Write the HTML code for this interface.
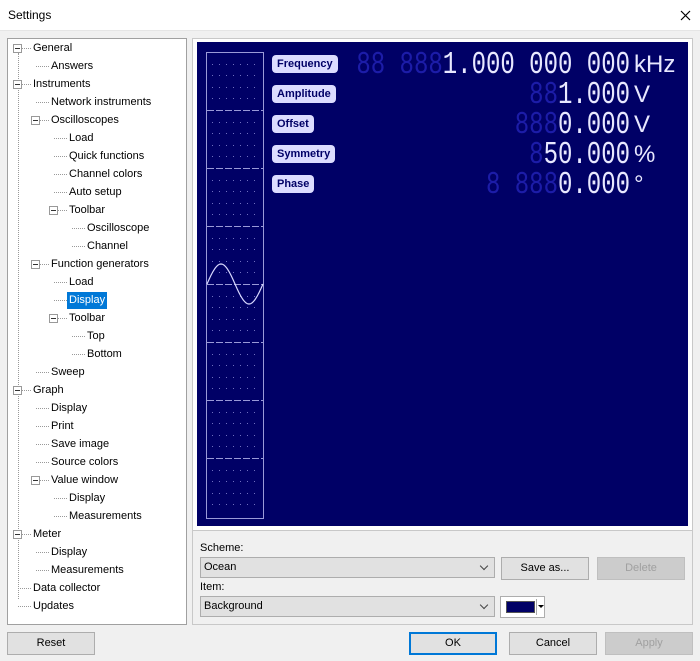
<!DOCTYPE html>
<html><head><meta charset="utf-8"><style>
*{margin:0;padding:0;box-sizing:border-box}
body{width:700px;height:661px;background:#f0f0f0;font-family:"Liberation Sans",sans-serif;font-size:11px;color:#000;position:relative;overflow:hidden}
.a{position:absolute}
.title{left:0;top:0;width:700px;height:31px;background:#fff;border-bottom:1px solid #e5e5e5}
.tree{left:7px;top:38px;width:180px;height:587px;background:#fff;border:1px solid #a0a0a0}
.it{position:absolute;height:17px;line-height:17px;white-space:nowrap;font-size:11px}
.sel{background:#0078d7;color:#fff;padding:0 2px;margin-left:-2px}
.box{position:absolute;width:9px;height:9px;border:1px solid #999;background:#fff}
.box:after{content:"";position:absolute;left:1px;top:3px;width:5px;height:1px;background:#333}
.st{position:absolute;height:1px;border-top:1px dotted #999}
.vl{position:absolute;width:1px;border-left:1px dotted #999}
.disp{left:197px;top:42px;width:491px;height:484px;background:#000066}
.pill{position:absolute;left:75px;height:18px;background:#dcdcff;color:#000066;font-weight:bold;font-size:11px;line-height:19px;padding:0 5px;border-radius:4px}
.num{position:absolute;right:58px;font-family:"Liberation Mono",monospace;font-size:24px;line-height:24px;color:#e8e8ff;white-space:pre;transform:scaleY(1.3);transform-origin:0 0}
.num .g{color:#1c1ca8}
.unit{position:absolute;left:437px;font-size:24px;line-height:30px;color:#e8e8ff}
.btn{position:absolute;height:23px;border:1px solid #adadad;background:#e1e1e1;text-align:center;line-height:21px;font-size:11px}
.dis{color:#a0a0a0;background:#cccccc;border-color:#bfbfbf}
.cmb{position:absolute;height:21px;border:1px solid #adadad;background:#e1e1e1;padding-left:3px;line-height:19px}
.cmb:after{content:"";position:absolute;right:7px;top:5px;width:5px;height:5px;border-right:1px solid #444;border-bottom:1px solid #444;transform:rotate(45deg)}
</style></head><body>
<div class="a title"><div class="a" style="left:8px;top:8px;font-size:12px">Settings</div>
<svg class="a" style="left:680px;top:10px" width="11" height="11"><path d="M1 1L10 10M10 1L1 10" stroke="#000" stroke-width="1.2"/></svg></div>

<div class="a tree" id="tree"></div>

<div class="a" style="left:192px;top:38px;width:501px;height:493px;border:1px solid #c8c8c8;background:#fff"></div>
<div class="a" style="left:192px;top:531px;width:501px;height:94px;border:1px solid #c8c8c8;border-top:none"></div>
<div class="a disp">
<svg class="a" style="left:0;top:0" width="491" height="484">
<rect x="9.5" y="10.5" width="57" height="466" fill="none" stroke="#9a9ad8"/>
<g stroke="#9a9ad8" stroke-dasharray="7 2">
<line x1="10" y1="68.5" x2="66" y2="68.5"/><line x1="10" y1="126.5" x2="66" y2="126.5"/><line x1="10" y1="184.5" x2="66" y2="184.5"/><line x1="10" y1="242.5" x2="66" y2="242.5"/><line x1="10" y1="300.5" x2="66" y2="300.5"/><line x1="10" y1="358.5" x2="66" y2="358.5"/><line x1="10" y1="416.5" x2="66" y2="416.5"/></g>
<g id="dots" fill="#7070c0"></g>
<path id="sine" fill="none" stroke="#d8d8ff" stroke-width="1.2"/>
</svg>
<div class="pill" style="top:13px">Frequency</div>
<div class="pill" style="top:43px">Amplitude</div>
<div class="pill" style="top:73px">Offset</div>
<div class="pill" style="top:103px">Symmetry</div>
<div class="pill" style="top:133px">Phase</div>
<div class="num" style="top:9px"><span class="g">88 888</span>1.000 000 000</div>
<div class="num" style="top:39px"><span class="g">88</span>1.000</div>
<div class="num" style="top:69px"><span class="g">888</span>0.000</div>
<div class="num" style="top:99px"><span class="g">8</span>50.000</div>
<div class="num" style="top:129px"><span class="g">8 888</span>0.000</div>
<div class="unit" style="top:8px">kHz</div>
<div class="unit" style="top:38px">V</div>
<div class="unit" style="top:68px">V</div>
<div class="unit" style="top:98px">%</div>
<div class="unit" style="top:128px">°</div>
</div>

<div class="a" style="left:200px;top:542px">Scheme:</div>
<div class="cmb" style="left:200px;top:557px;width:295px">Ocean</div>
<div class="btn" style="left:501px;top:557px;width:88px">Save as...</div>
<div class="btn dis" style="left:597px;top:557px;width:88px">Delete</div>
<div class="a" style="left:200px;top:581px">Item:</div>
<div class="cmb" style="left:200px;top:596px;width:295px">Background</div>
<div class="a" style="left:500px;top:596px;width:45px;height:22px;border:1px solid #adadad;background:#fff">
<div class="a" style="left:5px;top:4px;width:29px;height:12px;background:#000066;border:1px solid #555"></div>
<div class="a" style="left:35px;top:2px;width:1px;height:16px;background:#aaa"></div>
<div class="a" style="left:37px;top:8px;border:3px solid transparent;border-top:3px solid #000"></div></div>

<div class="btn" style="left:7px;top:632px;width:88px">Reset</div>
<div class="btn" style="left:409px;top:632px;width:88px;border:2px solid #0078d7;line-height:19px">OK</div>
<div class="btn" style="left:509px;top:632px;width:88px">Cancel</div>
<div class="btn dis" style="left:605px;top:632px;width:88px">Apply</div>

<script>
var items=[["General",0,1],["Answers",1],["Instruments",0,1],["Network instruments",1],["Oscilloscopes",1,1],["Load",2],["Quick functions",2],["Channel colors",2],["Auto setup",2],["Toolbar",2,1],["Oscilloscope",3],["Channel",3],["Function generators",1,1],["Load",2],["Display",2,0,1],["Toolbar",2,1],["Top",3],["Bottom",3],["Sweep",1],["Graph",0,1],["Display",1],["Print",1],["Save image",1],["Source colors",1],["Value window",1,1],["Display",2],["Measurements",2],["Meter",0,1],["Display",1],["Measurements",1],["Data collector",0],["Updates",0]];
var t=document.getElementById('tree'),h='';
h+='<div class="vl" style="left:10px;top:14px;height:546px"></div>';
items.forEach(function(it,i){var y=1+i*18,l=it[1],tx=25+l*18,bx=5+l*18;
 h+='<div class="st" style="left:'+(bx+5)+'px;top:'+(y+8)+'px;width:'+(tx-bx-7)+'px"></div>';
 if(it[2])h+='<div class="box" style="left:'+bx+'px;top:'+(y+4)+'px"></div>';
 h+='<div class="it'+(it[3]?' sel':'')+'" style="left:'+tx+'px;top:'+y+'px">'+it[0]+'</div>';});
t.innerHTML=h;
var d='';for(var r=0;r<8;r++)for(var k=1;k<5;k++){var y=10+r*58+k*11.6;for(var x=15;x<64;x+=7)d+='<rect x="'+x+'" y="'+y.toFixed(0)+'" width="1" height="1"/>';}
document.getElementById('dots').innerHTML=d;
var p='';for(var x=0;x<=56;x++){var y=242-20*Math.sin(x/56*2*Math.PI);p+=(x?'L':'M')+(10+x)+' '+y.toFixed(1);}
document.getElementById('sine').setAttribute('d',p);
</script>
</body></html>
